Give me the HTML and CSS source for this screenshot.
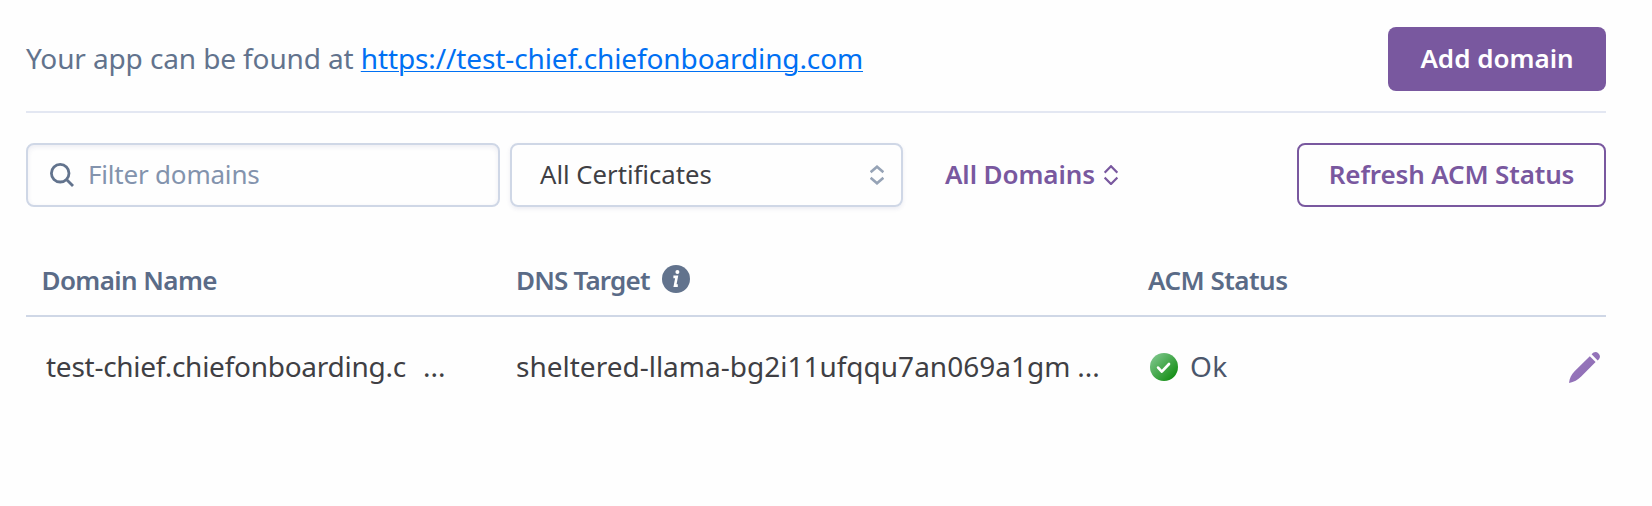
FILE: index.html
```html
<!DOCTYPE html>
<html lang="en">
<head>
<meta charset="utf-8">
<title>Domains</title>
<link rel="stylesheet" href="styles.css">
</head>
<body>
<main class="domains">
  <header class="intro">
    <p class="intro-text">Your app can be found at <a class="app-link" href="#">https://test-chief.chiefonboarding.com</a></p>
    <button class="btn btn-primary" type="button">Add domain</button>
  </header>
  <div class="toolbar">
    <label class="search">
      <svg class="search-icon" viewBox="0 0 24 24"><circle cx="10.2" cy="10.2" r="8.8"/><path d="M16.5 16.5L23 23"/></svg>
      <span class="placeholder">Filter domains</span>
    </label>
    <div class="select">
      <span class="select-label">All Certificates</span>
      <svg class="chevrons" viewBox="0 0 14 20"><path d="M.6 7.2L7 1.7L13.4 7.2M.6 12.8L7 18.3L13.4 12.8"/></svg>
    </div>
    <button class="scope" type="button">
      <span class="scope-label">All Domains</span>
      <svg class="scope-chevrons" viewBox="0 0 14 20"><path d="M.6 7.6L7 1.2L13.4 7.6M.6 12.6L7 19L13.4 12.6"/></svg>
    </button>
    <button class="btn btn-outline" type="button">Refresh ACM Status</button>
  </div>
  <section class="table">
    <div class="row head">
      <div class="cell name"><span class="th-name">Domain Name</span></div>
      <div class="cell target"><span class="th-target">DNS Target</span>
        <svg class="info" viewBox="0 0 28 28"><circle cx="14" cy="14" r="14"/><circle class="mark" cx="15.4" cy="6.9" r="2"/><path class="stem" d="M11.4 11.9H14.7L13 20.6H15.8"/></svg>
      </div>
      <div class="cell status"><span class="th-status">ACM Status</span></div>
    </div>
    <div class="row body">
      <div class="cell name"><span class="domain">test-chief.chiefonboarding.c</span><span class="more">...</span></div>
      <div class="cell target"><span class="host">sheltered-llama-bg2i11ufqqu7an069a1gm</span><span class="more">...</span></div>
      <div class="cell status">
        <svg class="check" viewBox="0 0 28 28"><defs><linearGradient id="ok" x1="0" y1="0" x2="1" y2="1"><stop offset="0.1" stop-color="#7cc58a"/><stop offset="0.9" stop-color="#108c10"/></linearGradient></defs><circle cx="14" cy="14" r="14" fill="url(#ok)"/><path d="M8.1 14.6L11.8 18.6L19 11"/></svg>
        <span class="ok">Ok</span>
      </div>
      <svg class="pencil" viewBox="0 0 31 31"><defs><linearGradient id="pen" x1="0" y1="0" x2="1" y2="1"><stop offset="0" stop-color="#9b7cbf"/><stop offset="1" stop-color="#8b68b2"/></linearGradient></defs><path fill="url(#pen)" d="M20.8 4.3L26.6 10.1L12.2 24.5C8.8 27.9 5 30.2 0 31C.6 26 2.2 22.6 5.8 19.1ZM22.6 2.2C25-.3 27.3-.6 29.5 1.5C31.7 3.8 31.4 6 28.7 8.4Z"/></svg>
    </div>
  </section>
</main>
</body>
</html>
```

FILE: styles.css
```css
* { box-sizing: border-box; }
body { margin: 0; background: #fefefe; color: #3f3f44; font: 400 26px/36px "Noto Sans", "Open Sans", sans-serif; }
button { font: inherit; background: none; border: 0; padding: 0; }
svg { display: block; flex: none; fill: none; }
.domains { padding: 27px 46px 0 26px; }

.intro { display: flex; align-items: center; justify-content: space-between; height: 86px; padding-bottom: 20px; border-bottom: 2px solid #e3e7f2; }
.intro-text { margin: 0; padding-bottom: 2px; font-size: 28px; color: #62738d; letter-spacing: -0.12px; white-space: nowrap; }
.app-link { color: #0070f3; text-decoration: underline; text-decoration-thickness: 1px; text-underline-offset: 2px; }

.btn { height: 64px; border-radius: 8px; font-weight: 600; padding: 0 0 2px; white-space: nowrap; }
.btn-primary { width: 218px; background: #79589f; color: #fff; }
.btn-outline { width: 309px; margin-left: auto; border: 2px solid #79589f; color: #79589f; letter-spacing: -0.15px; }

.toolbar { display: flex; margin-top: 30px; height: 64px; }
.search { display: flex; align-items: center; width: 474px; padding-left: 22px; border: 2px solid #cfd7e6; border-radius: 8px; box-shadow: inset 0 2px 5px rgba(50, 60, 120, .09); }
.search-icon { width: 24px; height: 24px; stroke: #62738d; stroke-width: 2.8; }
.placeholder { margin-left: 14px; padding-bottom: 2px; color: #8393ad; letter-spacing: -0.2px; }
.select { display: flex; align-items: center; justify-content: space-between; width: 393px; margin-left: 10px; padding: 0 17px 0 28px; border: 2px solid #cfd7e6; border-radius: 8px; box-shadow: 0 2px 4px rgba(50, 60, 120, .09); }
.select-label { font-size: 25.7px; }
.chevrons { width: 14px; height: 20px; stroke: #96a3b6; stroke-width: 2.6; }
.scope { display: flex; align-items: center; margin-left: 42px; color: #79589f; font-weight: 600; }
.scope-label { padding-bottom: 2px; letter-spacing: -0.1px; }
.scope-chevrons { width: 14px; height: 20px; margin-left: 9px; stroke: #79589f; stroke-width: 2.2; }

.table { margin-top: 38px; }
.row { display: grid; grid-template-columns: 490px 632px 1fr auto; align-items: center; }
.cell { display: flex; align-items: center; white-space: nowrap; }
.head { height: 72px; border-bottom: 2px solid #cfd7e6; color: #5a6b87; font-weight: 600; }
.name { padding-left: 15.5px; }
.head .cell { height: 70px; }
.th-name { letter-spacing: -0.6px; }
.th-status { letter-spacing: -0.5px; }
.th-target { letter-spacing: -0.8px; }
.info { width: 28px; height: 28px; margin: -2px 0 0 12.5px; fill: #62738d; }
.info .mark { fill: #fff; }
.info .stem { fill: none; stroke: #fff; stroke-width: 2.6; }
.body { height: 100px; font-size: 28px; }
.body .name { padding-left: 20px; }
.domain { letter-spacing: -0.26px; }
.domain + .more { margin-left: 17px; }
.host + .more { margin-left: 7px; }
.body span { padding-bottom: 3px; }
.check { width: 28px; height: 28px; margin-left: 2px; }
.check path { stroke: #fff; stroke-width: 2.7; stroke-linecap: round; stroke-linejoin: round; }
.ok { margin-left: 12px; color: #4b566b; letter-spacing: 0.4px; }
.pencil { width: 31px; height: 31px; margin-right: 6px; }
```
